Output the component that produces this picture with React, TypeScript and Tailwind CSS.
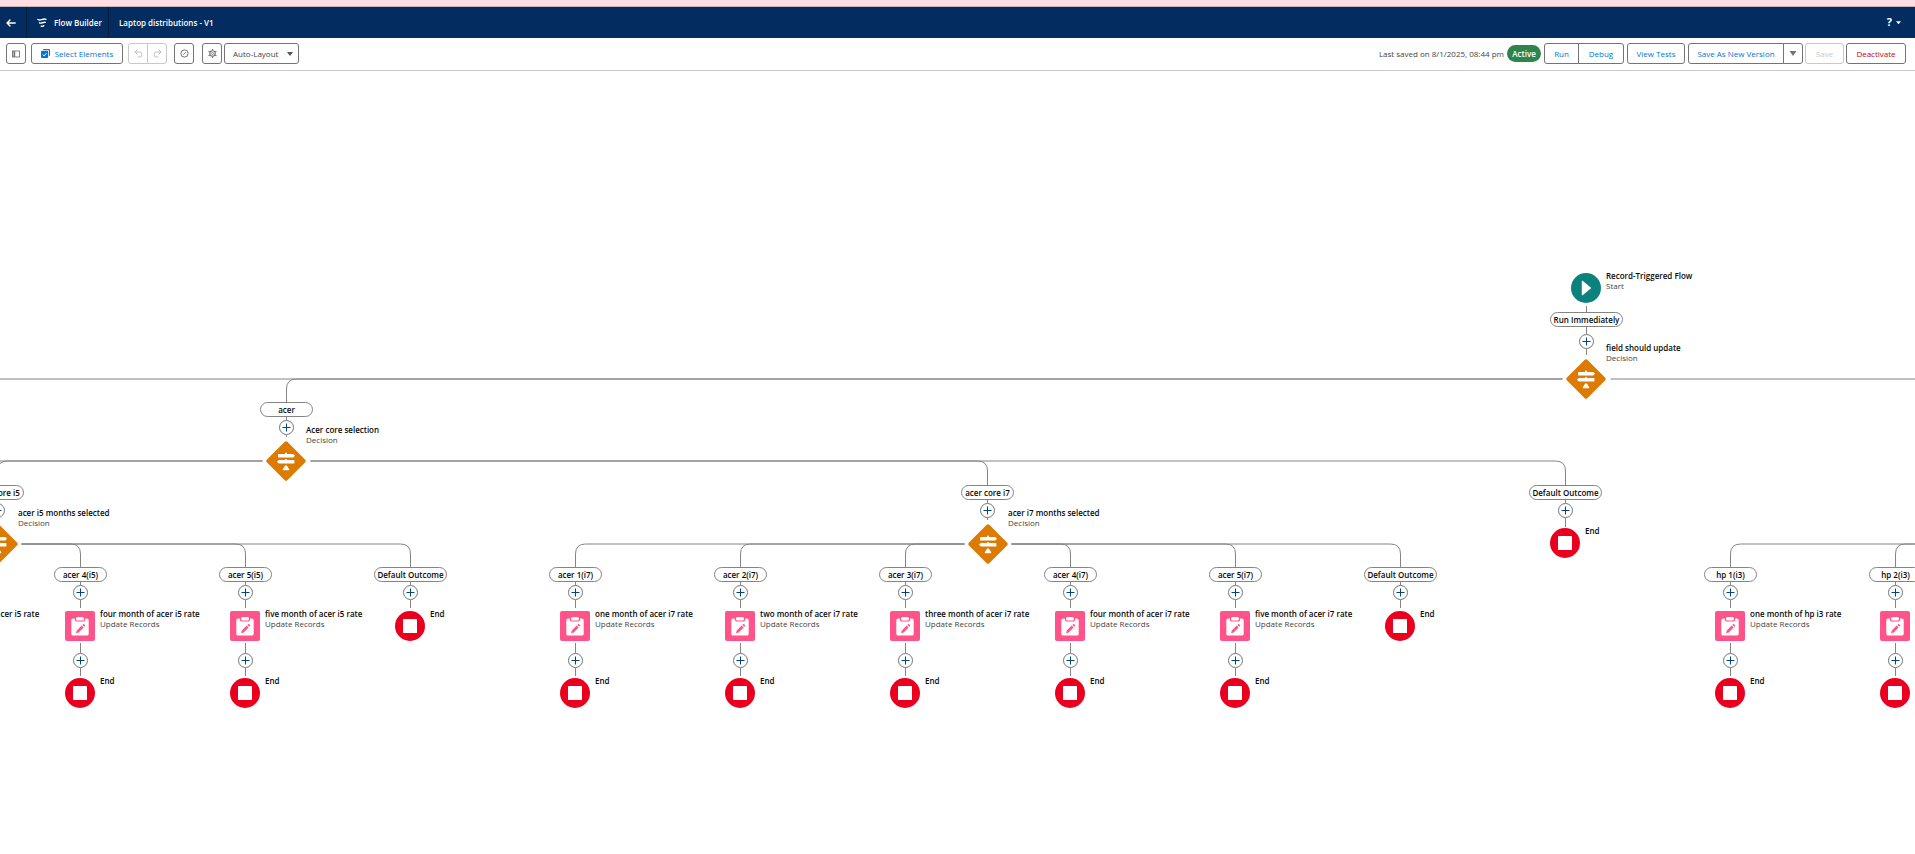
import React from "react";
import { clsx } from "clsx";

type Kind = "decision" | "update" | "end" | "start";

interface FlowNode {
  x: number;
  y: number;
  kind: Kind;
  title?: string;
  subtitle?: string;
}

interface Branch {
  x: number;
  y: number;
  label: string;
  wide?: boolean;
}

const leaves = [
  { x: 80, label: "acer 4(i5)", title: "four month of acer i5 rate" },
  { x: 245, label: "acer 5(i5)", title: "five month of acer i5 rate" },
  { x: 575, label: "acer 1(i7)", title: "one month of acer i7 rate" },
  { x: 740, label: "acer 2(i7)", title: "two month of acer i7 rate" },
  { x: 905, label: "acer 3(i7)", title: "three month of acer i7 rate" },
  { x: 1070, label: "acer 4(i7)", title: "four month of acer i7 rate" },
  { x: 1235, label: "acer 5(i7)", title: "five month of acer i7 rate" },
  { x: 1730, label: "hp 1(i3)", title: "one month of hp i3 rate" },
];

const nodes: FlowNode[] = [
  { x: 1586, y: 288, kind: "start", title: "Record-Triggered Flow", subtitle: "Start" },
  { x: 1586, y: 379, kind: "decision", title: "field should update", subtitle: "Decision" },
  { x: 286, y: 461, kind: "decision", title: "Acer core selection", subtitle: "Decision" },
  { x: -2, y: 544, kind: "decision", title: "acer i5 months selected", subtitle: "Decision" },
  { x: 988, y: 544, kind: "decision", title: "acer i7 months selected", subtitle: "Decision" },
  { x: 1565, y: 543, kind: "end", title: "End" },
  { x: 410, y: 626, kind: "end", title: "End" },
  { x: 1400, y: 626, kind: "end", title: "End" },
  { x: -85, y: 626, kind: "update", title: "three month of acer i5 rate" },
  { x: 1895, y: 626, kind: "update" },
  { x: 1895, y: 693, kind: "end" },
  ...leaves.flatMap((l): FlowNode[] => [
    { x: l.x, y: 626, kind: "update", title: l.title, subtitle: "Update Records" },
    { x: l.x, y: 693, kind: "end", title: "End" },
  ]),
];

const branches: Branch[] = [
  { x: 1586, y: 319, label: "Run Immediately", wide: true },
  { x: 286, y: 409, label: "acer" },
  { x: -3, y: 492, label: "acer core i5" },
  { x: 987, y: 492, label: "acer core i7" },
  { x: 1565, y: 492, label: "Default Outcome", wide: true },
  { x: 410, y: 574, label: "Default Outcome", wide: true },
  { x: 1400, y: 574, label: "Default Outcome", wide: true },
  { x: 1895, y: 574, label: "hp 2(i3)" },
  ...leaves.map((l) => ({ x: l.x, y: 574, label: l.label })),
];

const adders = [
  { x: 1586, y: 341 },
  { x: 286, y: 427 },
  { x: -3, y: 510 },
  { x: 987, y: 510 },
  { x: 1565, y: 510 },
  { x: 410, y: 592 },
  { x: 1400, y: 592 },
  { x: 1895, y: 592 },
  { x: 1895, y: 660 },
  ...leaves.flatMap((l) => [
    { x: l.x, y: 592 },
    { x: l.x, y: 660 },
  ]),
];

const drop = (from: number, to: number, y: number, end: number) => {
  const r = to > from ? -10 : 10;
  return `M${from} ${y}H${to + r}Q${to} ${y} ${to} ${y + 10}V${end}`;
};

const connectors = [
  "M1586 306V355",
  drop(1562, 286, 379, 437),
  "M-1 379H1562M1610 379H2400",
  drop(262, -3, 461, 520),
  "M-1 461H262",
  drop(310, 987, 461, 520),
  drop(310, 1565, 461, 527),
  ...[80, 245, 410].map((x) => drop(21, x, 544, 608)),
  ...[575, 740, 905].map((x) => drop(964, x, 544, 608)),
  ...[1070, 1235, 1400].map((x) => drop(1011, x, 544, 608)),
  ...[1730, 1895].map((x) => drop(2400, x, 544, 608)),
  "M1895 643V676",
  ...leaves.map((l) => `M${l.x} 643V676`),
];

function NodeIcon({ kind }: { kind: Kind }) {
  if (kind === "start")
    return (
      <svg viewBox="0 0 30 30" className="size-[30px]" aria-hidden="true">
        <circle cx="15" cy="15" r="15" fill="#0b827c" />
        <path d="M10.800 8.200v13.600a.5.5 0 0 0 .8.400l8.200-6.700a.7.7 0 0 0 0-1l-8.200-6.700a.5.5 0 0 0-.8.400z" fill="#fff" />
      </svg>
    );
  if (kind === "end")
    return (
      <svg viewBox="0 0 30 30" className="size-[30px]" aria-hidden="true">
        <circle cx="15" cy="15" r="15" fill="#ea001e" />
        <rect x="8" y="8" width="14" height="14" rx=".6" fill="#fff" />
      </svg>
    );
  if (kind === "update")
    return (
      <svg viewBox="0 0 30 30" className="size-[30px]" aria-hidden="true">
        <rect width="30" height="30" rx="2" fill="#ff538a" />
        <path d="M8.200 7.400h1.600v.6a2.600 2.600 0 0 0 2.600 2.600h5.200A2.600 2.600 0 0 0 20.200 8v-.6h1.600A1.900 1.900 0 0 1 23.700 9.300v13.400a1.900 1.900 0 0 1-1.900 1.900H8.200a1.900 1.900 0 0 1-1.900-1.900V9.300a1.900 1.900 0 0 1 1.900-1.900z" fill="#fff" />
        <rect x="11" y="6" width="8" height="3.600" rx="1.500" fill="#fff" />
        <path d="M11 22.200l.8-2.700 4.900-4.900 1.900 1.900-4.900 4.900zM17.400 13.900l.7-.7a.8.800 0 0 1 1.100 0l.8.800a.8.800 0 0 1 0 1.100l-.7.700z" fill="#ff538a" />
      </svg>
    );
  return (
    <svg viewBox="0 0 42 42" className="size-[42px]" aria-hidden="true">
      <rect x="6.500" y="6.500" width="29" height="29" rx="1.800" transform="rotate(45 21 21)" fill="#dd7a01" />
      <path d="M20 13.400q0-.9 1-.9t1 .9v.5h6.300l1.700 1.800-1.700 1.800H13.600a.5.500 0 0 1-.5-.5v-2.600a.5.500 0 0 1 .5-.5H20zM20 20v-.3q0-.8 1-.8t1 .8v.3h6.900a.5.500 0 0 1 .5.500v2.600a.5.500 0 0 1-.5.500H13.700L12 21.800 13.700 20zM20 25.800q1-1 2 0l2.200 3.400q.4 1-.6 1h-5.200q-1 0-.6-1z" fill="#fff" />
    </svg>
  );
}

function NodeView({ x, y, kind, title, subtitle }: FlowNode) {
  const decision = kind === "decision";
  return (
    <div className="absolute size-0" style={{ left: x, top: y }}>
      <div className="absolute top-0 left-0 -translate-1/2">
        <NodeIcon kind={kind} />
      </div>
      {title && (
        <div
          className={clsx(
            "absolute left-5 text-[8px] leading-[10px] whitespace-nowrap",
            decision ? "-top-9" : "-top-[17px]",
          )}
        >
          <p className="font-semibold text-[#080808]">{title}</p>
          {subtitle && <p className="text-[#444]">{subtitle}</p>}
        </div>
      )}
    </div>
  );
}

const toolButton =
  "flex h-[21px] items-center justify-center border bg-white text-[8px] whitespace-nowrap";
const outlined = "border-[#747474]";
const faded = "border-[#c9c9c9] text-[#c9c9c9]";

export default function App() {
  return (
    <div className="flex min-h-screen flex-col overflow-hidden bg-white font-['Open_Sans','Noto_Sans',sans-serif] text-[#444]">
      <div className="h-[7px] border-b border-[#c9b3bb] bg-[#fedee3]" />
      <header className="flex h-[31px] items-center bg-[#032d60] text-[8px] font-semibold text-white">
        <a href="#back" aria-label="Back" className="flex h-full w-[27px] items-center justify-center border-r border-[#011b3d] pr-1">
          <svg viewBox="0 0 10 8" className="h-2 w-[10px]" fill="none" stroke="#fff" strokeWidth="1.400" strokeLinecap="round" strokeLinejoin="round">
            <path d="M9.200 4H1M4 1L1 4l3 3" />
          </svg>
        </a>
        <div className="flex h-full w-[82px] items-center gap-[7px] border-r border-[#011b3d] pl-[10px]">
          <svg viewBox="0 0 10 10" className="size-[10px]" fill="none" stroke="#fff" strokeWidth="1.400" strokeLinecap="round">
            <path d="M1 1.500C3.500 3.200 5.500 0 9 1.300M2.500 4.800C4.500 6 6 3.700 8.300 4.400M4.200 8.200c1 .6 1.600-.3 2.600-.4" />
          </svg>
          <span className="whitespace-nowrap">Flow Builder</span>
        </div>
        <h1 className="pl-[10px]">Laptop distributions - V1</h1>
        <button type="button" aria-label="Help" className="mr-[14px] ml-auto flex items-center gap-1 text-[11px] font-bold">
          ?
          <svg viewBox="0 0 6 4" className="h-1 w-[5px]"><path d="M0 0h6L3 3.500z" fill="#fff" /></svg>
        </button>
      </header>

      <div className="flex h-[33px] items-start border-b border-[#c9c9c9] bg-white pt-[5px] pr-[9px] pl-[6px]">
        <button type="button" aria-label="Toggle toolbox" className={clsx(toolButton, outlined, "w-5 rounded-[3px]")}>
          <svg viewBox="0 0 8 8" className="size-2" fill="none" stroke="#747474" strokeWidth=".9"><rect x=".5" y="1" width="7" height="6" /><path d="M2.300 1v6" strokeWidth="1.800" /></svg>
        </button>
        <button type="button" className={clsx(toolButton, outlined, "ml-[5px] w-[92px] gap-[5px] rounded-[3px] text-[#0176d3]")}>
          <svg viewBox="0 0 9 9" className="size-[9px]"><path d="M3 0h5a1 1 0 0 1 1 1v5a1 1 0 0 1-1 1V2a1 1 0 0 0-1-1H2a1 1 0 0 1 1-1z" fill="#0176d3" /><rect y="1.800" width="7.200" height="7.200" rx="1" fill="#0176d3" /><path d="M1.700 5.500l1.400 1.400 2.500-2.800" fill="none" stroke="#fff" /></svg>
          Select Elements
        </button>
        <div className="ml-[5px] flex">
          <button type="button" disabled aria-label="Undo" className={clsx(toolButton, faded, "w-5 rounded-l-[3px]")}>
            <svg viewBox="0 0 9 9" className="size-[9px]" fill="none" stroke="#c0c0c0" strokeLinecap="round"><path d="M3 1L1 3l2 2M1 3h4.500a2.500 2.500 0 0 1 0 5H4" /></svg>
          </button>
          <button type="button" disabled aria-label="Redo" className={clsx(toolButton, faded, "-ml-px w-5 rounded-r-[3px]")}>
            <svg viewBox="0 0 9 9" className="size-[9px]" fill="none" stroke="#c0c0c0" strokeLinecap="round"><path d="M6 1l2 2-2 2M8 3H3.500a2.500 2.500 0 0 0 0 5H5" /></svg>
          </button>
        </div>
        <button type="button" aria-label="Issues" className={clsx(toolButton, outlined, "ml-[7px] w-5 rounded-[3px]")}>
          <svg viewBox="0 0 9 9" className="size-[9px]" fill="none" stroke="#747474"><circle cx="4.500" cy="4.500" r="3.600" /><path d="M3.300 5.700l2.400-2.400" /></svg>
        </button>
        <button type="button" aria-label="Flow settings" className={clsx(toolButton, outlined, "ml-2 w-5 rounded-[3px]")}>
          <svg viewBox="0 0 9 9" className="size-[9px]" fill="none" stroke="#747474"><circle cx="4.500" cy="4.500" r="2.700" strokeWidth="1.100" /><circle cx="4.500" cy="4.500" r="1" strokeWidth=".8" /><path d="M4.500 0v1.500M4.500 7.500V9M.6 2.250l1.300.750M7.100 6l1.300.750M.6 6.750L1.900 6M7.100 3l1.300-.750" strokeWidth="1.300" /></svg>
        </button>
        <div className="relative ml-[2px] flex">
          <select aria-label="Layout mode" className="h-[21px] w-[75px] appearance-none rounded-[3px] border border-[#747474] bg-white pl-2 text-[8px] text-[#444]">
            <option>Auto-Layout</option>
            <option>Free-Form</option>
          </select>
          <svg viewBox="0 0 6 4" className="pointer-events-none absolute top-[9px] right-[6px] h-1 w-[6px]"><path d="M0 0h6L3 4z" fill="#555" /></svg>
        </div>

        <div className="ml-auto flex h-[21px] items-center gap-[3px] text-[8px] whitespace-nowrap">
          <span>Last saved on 8/1/2025, 08:44 pm</span>
          <span className="flex h-[17px] w-[34px] items-center justify-center rounded-full bg-[#2e844a] font-semibold text-white">Active</span>
        </div>
        <div className="ml-[3px] flex text-[#0176d3]">
          <button type="button" className={clsx(toolButton, outlined, "w-[35px] rounded-l-[3px]")}>Run</button>
          <button type="button" className={clsx(toolButton, outlined, "-ml-px w-[46px] rounded-r-[3px]")}>Debug</button>
        </div>
        <button type="button" className={clsx(toolButton, outlined, "ml-[3px] w-[58px] rounded-[3px] text-[#0176d3]")}>View Tests</button>
        <div className="ml-[3px] flex text-[#0176d3]">
          <button type="button" className={clsx(toolButton, outlined, "w-24 rounded-l-[3px]")}>Save As New Version</button>
          <button type="button" aria-label="More save options" className={clsx(toolButton, outlined, "-ml-px w-5 rounded-r-[3px]")}>
            <svg viewBox="0 0 8 5" className="h-[5px] w-2"><path d="M.5 0h7L4 5z" fill="#747474" /></svg>
          </button>
        </div>
        <button type="button" disabled className={clsx(toolButton, faded, "ml-[2px] w-[39px] rounded-[3px]")}>Save</button>
        <button type="button" className={clsx(toolButton, outlined, "ml-[2px] w-[60px] rounded-[3px] text-[#ba0517]")}>Deactivate</button>
      </div>

      <main className="relative grow overflow-hidden">
        <div className="absolute inset-x-0 -top-[71px] bottom-0">
          <svg className="absolute inset-0 size-full" fill="none" stroke="#848484" aria-hidden="true">
            <g transform="translate(.5 0)">
              {connectors.map((d) => (
                <path key={d} d={d} />
              ))}
            </g>
          </svg>
          {branches.map((b) => (
            <div key={`${b.x}-${b.y}`} className="absolute size-0" style={{ left: b.x, top: b.y }}>
              <span
                className={clsx(
                  "absolute -top-[7px] flex h-[15px] items-center justify-center rounded-full border border-[#848484] bg-white text-[8px] font-semibold whitespace-nowrap text-[#080808]",
                  b.wide ? "-left-9 w-[73px]" : "-left-[26px] w-[53px]",
                )}
              >
                {b.label}
              </span>
            </div>
          ))}
          {adders.map((a) => (
            <div key={`${a.x}-${a.y}`} className="absolute size-0" style={{ left: a.x, top: a.y }}>
              <button type="button" aria-label="Add element" className="absolute -top-[7px] -left-[7px] size-[15px] rounded-full bg-white">
                <svg viewBox="0 0 15 15" className="size-[15px]" fill="none">
                  <circle cx="7.500" cy="7.500" r="7" stroke="#747474" />
                  <path d="M3.500 7.500h8M7.500 3.500v8" stroke="#014486" />
                </svg>
              </button>
            </div>
          ))}
          {nodes.map((n) => (
            <NodeView key={`${n.x}-${n.y}`} {...n} />
          ))}
        </div>
      </main>
    </div>
  );
}
